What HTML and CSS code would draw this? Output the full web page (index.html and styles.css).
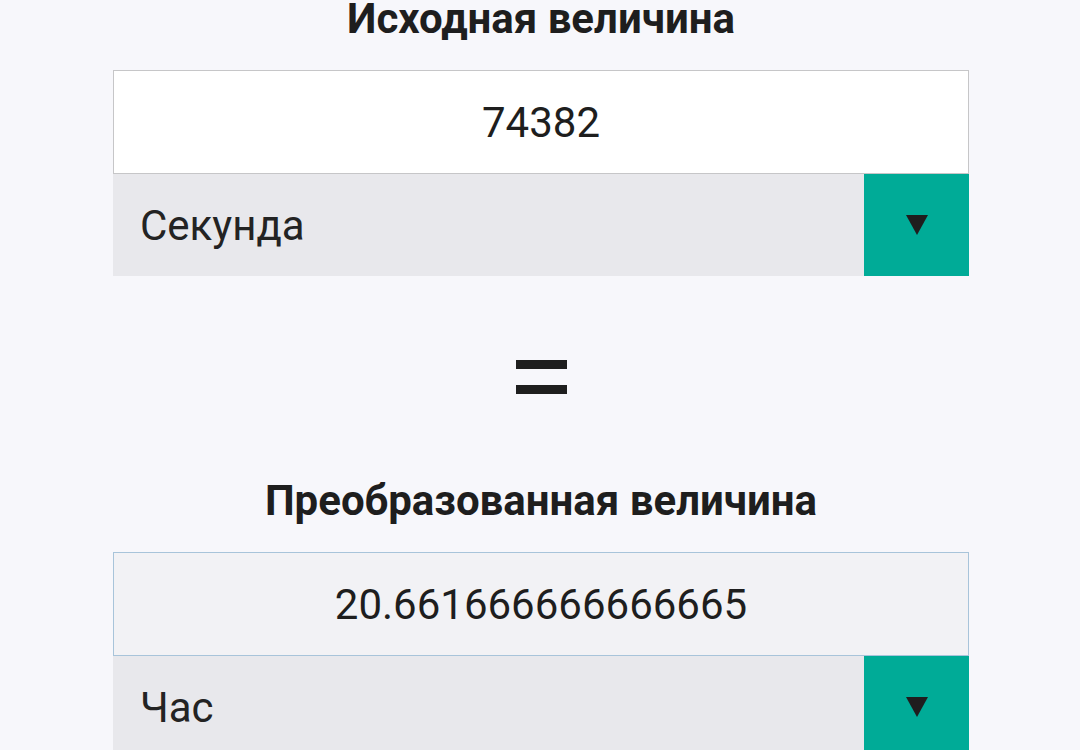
FILE: index.html
```html
<!DOCTYPE html>
<html lang="ru">
<head>
<meta charset="utf-8">
<link rel="stylesheet" href="styles.css">
</head>
<body>
<main class="converter">
  <section class="block">
    <h2 class="title">Исходная величина</h2>
    <div class="field">74382</div>
    <div class="select">
      <span class="select-label">Секунда</span>
      <span class="select-btn"><svg width="22" height="20" viewBox="0 0 22 20"><polygon points="0,0 22,0 11,20" fill="#1f1d1e"/></svg></span>
    </div>
  </section>
  <div class="equals"><span class="bar"></span><span class="bar"></span></div>
  <section class="block">
    <h2 class="title">Преобразованная величина</h2>
    <div class="field result">20.661666666666665</div>
    <div class="select">
      <span class="select-label">Час</span>
      <span class="select-btn"><svg width="22" height="20" viewBox="0 0 22 20"><polygon points="0,0 22,0 11,20" fill="#1f1d1e"/></svg></span>
    </div>
  </section>
</main>
</body>
</html>
```
FILE: styles.css
```css
html, body {
  margin: 0;
  padding: 0;
  background: #f7f7fb;
  font-family: Roboto, "Noto Sans", sans-serif;
  color: #212121;
}
.converter {
  width: 856px;
  margin-left: 113px;
  display: flex;
  flex-direction: column;
}
.block {
  display: flex;
  flex-direction: column;
}
.title {
  margin: 0 0 32px;
  font-size: 42px;
  line-height: 38px;
  font-weight: 700;
  text-align: center;
  color: #1e1e1e;
}
.field {
  height: 102px;
  border: 1px solid #c6c6c8;
  background: #ffffff;
  display: flex;
  align-items: center;
  justify-content: center;
  font-size: 42px;
  color: #1e1e1e;
}
.field.result {
  background: #f2f2f5;
  border-color: #a8c4da;
}
.select {
  height: 102px;
  display: flex;
  background: #e8e8ec;
}
.select-label {
  flex: 1;
  display: flex;
  align-items: center;
  padding-left: 27px;
  font-size: 42px;
  color: #232323;
}
.select-btn {
  width: 105px;
  background: #00ab97;
  display: flex;
  align-items: center;
  justify-content: center;
}
.equals {
  height: 202px;
  padding-bottom: 4px;
  display: flex;
  flex-direction: column;
  align-items: center;
  justify-content: center;
  gap: 16px;
}
.bar {
  width: 51px;
  height: 9px;
  background: #1e1e1e;
}
```
